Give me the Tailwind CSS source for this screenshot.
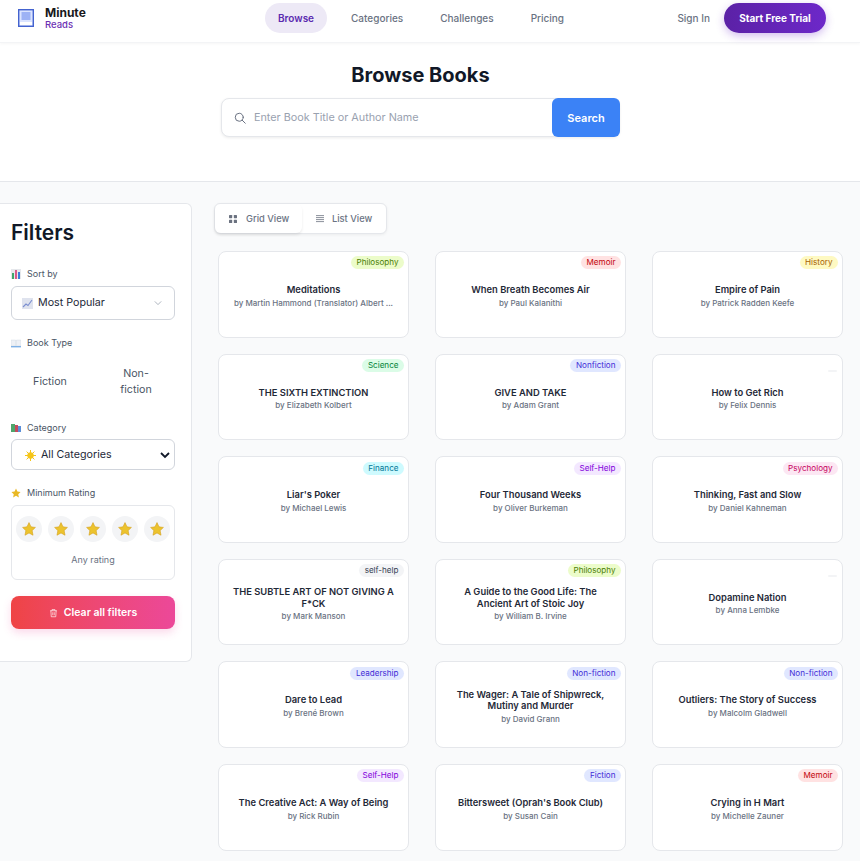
<!DOCTYPE html>
<html lang="en">
<head>
    <meta charset="UTF-8">
    <meta name="viewport" content="width=device-width, initial-scale=1.0">
    <title>Minute Reads - Browse Books</title>
    <script src="https://cdn.jsdelivr.net/npm/@tailwindcss/browser@4"></script>
</head>
<body class="bg-white text-gray-900 font-['Inter',sans-serif] overflow-hidden h-[861px]">

    <!-- Navbar -->
    <header class="h-[43px] pb-[6px] bg-white border-b border-gray-100 shadow-[0_1px_3px_rgba(0,0,0,0.04)] flex items-center relative">
        <div class="flex items-center w-[265px] pl-[18px]">
            <svg class="w-4 h-[18px]" viewBox="0 0 16 18">
                <rect x="0.7" y="0.7" width="14.6" height="16.6" fill="#dbe4ff" stroke="#4463cf" stroke-width="1.4"/>
                <rect x="3.5" y="3" width="9" height="8" fill="#9db2f5"/>
                <rect x="2" y="13" width="12" height="3" fill="#ffffff"/>
            </svg>
            <div class="ml-[11px]">
                <div class="text-[12px] leading-[13px] font-bold text-[#18181b]">Minute</div>
                <div class="text-[9.5px] leading-[11px] font-medium text-[#6b2fb3]">Reads</div>
            </div>
        </div>
        <nav class="flex items-center text-[10px] font-medium text-gray-500">
            <a class="w-[62px] h-[30px] rounded-full bg-[#ede9f6] text-[#5b2bb0] font-semibold flex items-center justify-center">Browse</a>
            <a class="ml-[24px]">Categories</a>
            <a class="ml-[37px]">Challenges</a>
            <a class="ml-[37px]">Pricing</a>
        </nav>
        <div class="ml-auto mr-[34px] flex items-center">
            <a class="text-[10px] font-medium text-gray-500">Sign In</a>
            <button class="ml-[14px] w-[102px] h-[30px] rounded-full bg-gradient-to-r from-[#5b21a6] to-[#6d28c9] text-white text-[10px] font-bold shadow-[0_3px_8px_rgba(109,40,201,0.3)]">Start Free Trial</button>
        </div>
    </header>

    <!-- Hero -->
    <section class="h-[139px] border-b border-gray-200 flex flex-col items-center pt-[19px] pr-[19px]">
        <h1 class="text-[20px] leading-[26px] font-bold text-[#111827]">Browse Books</h1>
        <div class="mt-[10px] w-[399px] h-[39px] bg-white rounded-[8px] border border-gray-200 shadow-[0_1px_3px_rgba(0,0,0,0.08)] flex items-center">
            <svg class="ml-[12px] w-[12px] h-[12px] text-gray-500" viewBox="0 0 24 24" fill="none" stroke="currentColor" stroke-width="2" stroke-linecap="round"><circle cx="10.5" cy="10.5" r="8"/><path d="M16.5 16.5 22.5 22.5"/></svg>
            <span class="ml-[8px] mt-[1px] text-[10.8px] text-gray-400">Enter Book Title or Author Name</span>
            <button class="ml-auto -mr-px w-[68px] h-[39px] pt-[1px] rounded-[6px] bg-[#3b82f6] text-white text-[11px] font-semibold">Search</button>
        </div>
    </section>

    <!-- Content -->
    <main class="bg-[#f9fafb] h-[680px] flex items-start pt-[21px]">

        <!-- Filters -->
        <aside class="w-[192px] h-[459px] shrink-0 bg-white border border-l-0 border-gray-200 rounded-r-[6px] pl-[11px] pr-[16px] pt-[14px]">
            <h2 class="text-[21px] leading-[30px] font-semibold text-[#111827]">Filters</h2>

            <div class="mt-[20px] flex items-center gap-[6px] text-[9px] text-gray-600 h-[12px]">
                <svg class="w-[10px] h-[10px]" viewBox="0 0 10 10"><rect width="10" height="10" fill="#e5e7eb"/><rect x="1" y="4" width="2" height="6" fill="#3fa66a"/><rect x="4" y="1" width="2" height="9" fill="#d9578a"/><rect x="7" y="3" width="2" height="7" fill="#3b7dd8"/></svg>
                Sort by
            </div>
            <div class="mt-[6px] h-[34px] w-[164px] rounded-[6px] border border-gray-300 bg-white flex items-center pl-[10px] pr-[12px] text-[10.7px] text-gray-800">
                <svg class="w-[11px] h-[11px] mr-[5px]" viewBox="0 0 11 11"><rect width="11" height="11" fill="#dfe3ee"/><path d="M1 9 4 6 6 7.5 10 2" fill="none" stroke="#7b8fd0" stroke-width="1.1"/></svg>
                Most Popular
                <svg class="ml-auto w-[8px] h-[8px] text-gray-400" viewBox="0 0 10 10" fill="none" stroke="currentColor" stroke-width="1"><path d="M1 3 5 7 9 3"/></svg>
            </div>

            <div class="mt-[17px] flex items-center gap-[6px] text-[9px] text-gray-600 h-[12px]">
                <svg class="w-[10px] h-[10px]" viewBox="0 0 10 10"><path d="M0 2H4.6V8H0ZM5.4 2H10V8H5.4Z" fill="#eef1f6" stroke="#cbd5e1" stroke-width="0.4"/><rect y="8" width="10" height="1.4" fill="#7fb1e6"/></svg>
                Book Type
            </div>
            <div class="mt-[8px] h-[49px] flex items-center text-[10.7px] leading-[16px] text-gray-600 text-center">
                <div class="w-[78px]">Fiction</div>
                <div class="w-[28px] ml-[33px] flex justify-center"><span>Non-<br>fiction</span></div>
            </div>

            <div class="mt-[16px] flex items-center gap-[6px] text-[9px] text-gray-600 h-[12px]">
                <svg class="w-[10px] h-[10px]" viewBox="0 0 10 10"><rect y="1" width="4" height="8" fill="#4fa56b"/><rect x="4" y="2" width="3" height="7" fill="#c44a5c"/><rect x="7" y="3" width="3" height="6" fill="#5b8fd8"/></svg>
                Category
            </div>
            <div class="mt-[5px] h-[31px] w-[164px] pt-[1px] rounded-[6px] border border-gray-300 bg-white flex items-center pl-[13px] pr-[4px] text-[10.7px] text-gray-800">
                <svg class="w-[11px] h-[11px] mr-[5px]" viewBox="0 0 11 11"><circle cx="5.5" cy="5.5" r="3.2" fill="#f5c518"/><path d="M5.5 0V11M0 5.5H11M1.6 1.6 9.4 9.4M9.4 1.6 1.6 9.4" stroke="#f5c518" stroke-width="1"/></svg>
                All Categories
                <svg class="ml-auto w-[10px] h-[10px] text-gray-900" viewBox="0 0 10 10" fill="none" stroke="currentColor" stroke-width="1.8"><path d="M1 3 5 7 9 3"/></svg>
            </div>

            <div class="mt-[17px] flex items-center gap-[6px] text-[9px] text-gray-600 h-[12px]">
                <svg class="w-[10px] h-[10px]" viewBox="0 0 24 24"><path d="M12 1 15.4 8.3 23 9.3 17.4 14.7 18.9 22.7 12 18.8 5.1 22.7 6.6 14.7 1 9.3 8.6 8.3Z" fill="#e9b824"/></svg>
                Minimum Rating
            </div>
            <div class="mt-[6px] w-[164px] h-[75px] rounded-[6px] border border-gray-200 bg-white flex flex-col items-center pt-[10px]">
                <div id="stars" class="flex gap-[6px]"></div>
                <div class="mt-[11px] text-[9px] text-gray-500">Any rating</div>
            </div>

            <button class="mt-[16px] w-[164px] h-[33px] rounded-[8px] bg-gradient-to-r from-[#ef4444] to-[#ec4899] text-white text-[10.5px] font-semibold flex items-center justify-center gap-[6px] shadow-[0_4px_8px_rgba(236,72,153,0.2)]">
                <svg class="w-[9px] h-[10px] text-white/80" viewBox="0 0 24 24" fill="none" stroke="currentColor" stroke-width="2.2"><path d="M3 6H21M8 6V3H16V6M5 6 6 22H18L19 6M10 10V18M14 10V18"/></svg>
                Clear all filters
            </button>
        </aside>

        <!-- Books -->
        <div class="ml-[22px] w-[630px]">
            <div class="w-[173px] h-[31px] bg-white rounded-[6px] border border-gray-200 shadow-[0_1px_3px_rgba(0,0,0,0.06)] flex items-center text-[9.3px] font-medium text-gray-500">
                <div class="w-[87px] h-[29px] rounded-[6px] shadow-[0_2px_3px_rgba(0,0,0,0.08)] flex items-center pl-[14px] gap-[9px]">
                    <svg class="w-[8px] h-[8px]" viewBox="0 0 8 8" fill="#6b7280"><rect width="3.2" height="3.2" rx="0.6"/><rect x="4.8" width="3.2" height="3.2" rx="0.6"/><rect y="4.8" width="3.2" height="3.2" rx="0.6"/><rect x="4.8" y="4.8" width="3.2" height="3.2" rx="0.6"/></svg>
                    Grid View
                </div>
                <div class="flex items-center pl-[14px] gap-[8px]">
                    <svg class="w-[8px] h-[8px]" viewBox="0 0 8 8" stroke="#6b7280" stroke-width="0.8"><path d="M0 0.6H8M0 2.6H8M0 4.6H8M0 6.6H8"/></svg>
                    List View
                </div>
            </div>
            <div id="books" class="mt-[17px] ml-[4px] grid grid-cols-[191px_191px_191px] gap-x-[26px] gap-y-[16px]"></div>
        </div>
    </main>

    <script>
        const badge = {
            lime: "bg-lime-100 text-lime-700",
            red: "bg-red-100 text-red-700",
            yellow: "bg-yellow-100 text-yellow-700",
            green: "bg-green-100 text-green-700",
            indigo: "bg-indigo-100 text-indigo-700",
            cyan: "bg-cyan-100 text-cyan-700",
            purple: "bg-purple-100 text-purple-700",
            pink: "bg-pink-100 text-pink-700",
            gray: "bg-gray-100 text-gray-700"
        };

        const books = [
            ["Meditations", "Martin Hammond (Translator) Albert ...", "Philosophy", "lime"],
            ["When Breath Becomes Air", "Paul Kalanithi", "Memoir", "red"],
            ["Empire of Pain", "Patrick Radden Keefe", "History", "yellow"],
            ["THE SIXTH EXTINCTION", "Elizabeth Kolbert", "Science", "green"],
            ["GIVE AND TAKE", "Adam Grant", "Nonfiction", "indigo"],
            ["How to Get Rich", "Felix Dennis", "", "gray"],
            ["Liar's Poker", "Michael Lewis", "Finance", "cyan"],
            ["Four Thousand Weeks", "Oliver Burkeman", "Self-Help", "purple"],
            ["Thinking, Fast and Slow", "Daniel Kahneman", "Psychology", "pink"],
            ["THE SUBTLE ART OF NOT GIVING A F*CK", "Mark Manson", "self-help", "gray"],
            ["A Guide to the Good Life: The Ancient Art of Stoic Joy", "William B. Irvine", "Philosophy", "lime"],
            ["Dopamine Nation", "Anna Lembke", "", "gray"],
            ["Dare to Lead", "Brené Brown", "Leadership", "indigo"],
            ["The Wager: A Tale of Shipwreck, Mutiny and Murder", "David Grann", "Non-fiction", "indigo"],
            ["Outliers: The Story of Success", "Malcolm Gladwell", "Non-fiction", "indigo"],
            ["The Creative Act: A Way of Being", "Rick Rubin", "Self-Help", "purple"],
            ["Bittersweet (Oprah's Book Club)", "Susan Cain", "Fiction", "indigo"],
            ["Crying in H Mart", "Michelle Zauner", "Memoir", "red"]
        ];

        document.getElementById("books").innerHTML = books.map(([title, author, tag, color]) => `
            <div class="relative h-[86.6px] bg-white rounded-[8px] border border-gray-200 flex flex-col items-center justify-center pt-[5px] px-[12px] text-center">
                ${tag
                    ? `<span class="absolute top-[4.4px] right-[4px] h-[13px] px-[5.5px] rounded-full text-[8.1px] leading-[13px] ${badge[color]}">${tag}</span>`
                    : `<span class="absolute top-[15px] right-[5px] h-[2px] w-[9px] rounded-full bg-gray-100"></span>`}
                <h3 class="text-[9.4px] leading-[11.5px] font-semibold text-[#1f2937]">${title}</h3>
                <p class="mt-[1px] text-[8px] leading-[13px] font-medium text-gray-500">by ${author}</p>
            </div>
        `).join("");

        document.getElementById("stars").innerHTML = Array(5).fill(`
            <div class="w-[26px] h-[26px] rounded-full bg-gray-100 flex items-center justify-center">
                <svg class="w-[14px] h-[14px]" viewBox="0 0 24 24"><path d="M12 1 15.4 8.3 23 9.3 17.4 14.7 18.9 22.7 12 18.8 5.1 22.7 6.6 14.7 1 9.3 8.6 8.3Z" fill="#ecc32e" stroke="#d49f1c" stroke-width="1" stroke-linejoin="round"/></svg>
            </div>
        `).join("");
    </script>
</body>
</html>
